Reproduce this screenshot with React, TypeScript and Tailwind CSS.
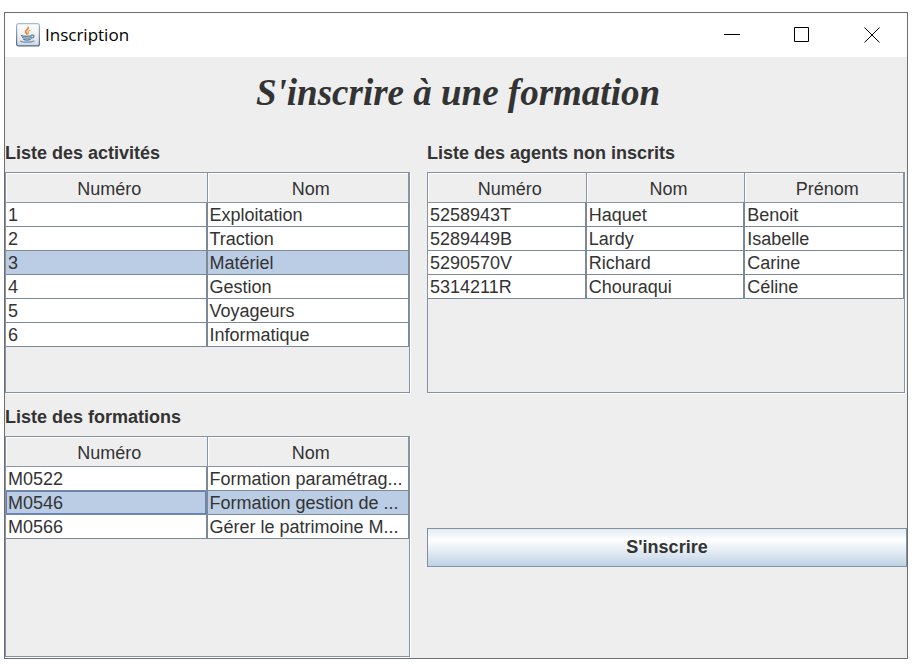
import { useState } from "react";

type Row = string[];

const activites: Row[] = [
  ["1", "Exploitation"],
  ["2", "Traction"],
  ["3", "Matériel"],
  ["4", "Gestion"],
  ["5", "Voyageurs"],
  ["6", "Informatique"],
];

const formations: Row[] = [
  ["M0522", "Formation paramétrag..."],
  ["M0546", "Formation gestion de ..."],
  ["M0566", "Gérer le patrimoine M..."],
];

const agents: Row[] = [
  ["5258943T", "Haquet", "Benoit"],
  ["5289449B", "Lardy", "Isabelle"],
  ["5290570V", "Richard", "Carine"],
  ["5314211R", "Chouraqui", "Céline"],
];

function JavaIcon() {
  return (
    <svg viewBox="0 0 24 24" className="size-6" aria-hidden="true">
      <defs>
        <linearGradient id="tile" x1="0" y1="0" x2="0" y2="1">
          <stop offset="0" stopColor="#fdfdfd" />
          <stop offset="0.6" stopColor="#eceef0" />
          <stop offset="1" stopColor="#cfd6dd" />
        </linearGradient>
        <linearGradient id="edge" x1="0" y1="0" x2="0" y2="1">
          <stop offset="0" stopColor="#a9bccd" />
          <stop offset="1" stopColor="#4c6883" />
        </linearGradient>
      </defs>
      <rect x="0.6" y="0.6" width="22.8" height="22.3" rx="2" fill="url(#tile)" stroke="url(#edge)" strokeWidth="1.2" />
      <g fill="none" strokeLinecap="round">
        <path d="M12.2 4.400c.9 2-3.400 2.800-2.700 4.600.3.900 1.300 1.300 1.600 2.100" stroke="#e9822f" strokeWidth="1.600" />
        <path d="M14 7.200c-2 .7-2.600 1.500-1.700 2.500.5.600.3 1-.2 1.300" stroke="#ec9a55" strokeWidth="1.100" />
        <path d="M5.500 12.600c1.800.9 8.500.9 10.200 0M6.600 14.500c1.700.9 6.800.9 8.500 0M7.700 16.400c1.500.7 5 .7 6.500 0" stroke="#557a9c" strokeWidth="1.200" />
        <path d="M15.800 12.200c3-.7 3 2.300-.4 3" stroke="#557a9c" strokeWidth="1.200" />
        <path d="M4.800 18.200c1.800 1.300 10.500 1.300 13.200-.2" stroke="#6d8eac" strokeWidth="1.200" />
      </g>
    </svg>
  );
}

interface ListProps {
  id: string;
  title: string;
  columns: string[];
  rows: Row[];
  initial?: number;
  focused?: boolean;
}

function ListPanel({ id, title, columns, rows, initial = -1, focused = false }: ListProps) {
  const [selected, setSelected] = useState(initial);
  return (
    <section className="flex flex-1 flex-col">
      <h2 id={id} className="h-[31px] text-lg leading-6 font-bold">
        {title}
      </h2>
      <div className="min-h-[200px] flex-1 border border-[#8492a2] shadow-[1px_1px_0_#ffffff]">
        <table aria-labelledby={id} className="w-full table-fixed border-separate border-spacing-0 text-lg leading-[21px]">
          <thead>
            <tr>
              {columns.map((c) => (
                <th
                  key={c}
                  scope="col"
                  className="h-[30px] border-r border-b border-[#8795a5] p-0 pt-1 pl-1.5 font-normal shadow-[inset_1px_1px_0_#ffffff]"
                >
                  {c}
                </th>
              ))}
            </tr>
          </thead>
          <tbody>
            {rows.map((row, i) => (
              <tr
                key={row[0]}
                onClick={() => setSelected(i)}
                aria-selected={i === selected}
                className={i === selected ? "bg-[#bacde4]" : "bg-white"}
              >
                {row.map((cell, j) => (
                  <td
                    key={j}
                    className={
                      "h-6 overflow-hidden border-b border-[#7a8a99] p-0 pt-0.5 pl-0.5 whitespace-nowrap " +
                      (j === row.length - 1 ? "border-r " : "border-r-2 ") +
                      (focused && i === selected && j === 0 ? "shadow-[inset_0_0_0_1px_#6382bf]" : "")
                    }
                  >
                    {cell}
                  </td>
                ))}
              </tr>
            ))}
          </tbody>
        </table>
      </div>
    </section>
  );
}

export default function App() {
  return (
    <div className="flex min-h-screen flex-col bg-white pt-3 pr-2 pb-[5px] pl-1 font-['Liberation_Sans',Arial,sans-serif] text-[#333333]">
      <main className="flex flex-1 flex-col border border-[#6f6f6f] bg-[#eeeeee]">
        <header className="flex h-11 items-center justify-between bg-white pl-[11px] text-black">
          <div className="flex items-center gap-[5px]">
            <JavaIcon />
            <span className="font-['Open_Sans',sans-serif] text-[17px] leading-6">Inscription</span>
          </div>
          <div className="flex">
            <button type="button" aria-label="Réduire" className="flex h-11 w-[70px] items-center justify-center">
              <svg viewBox="0 0 16 16" className="size-4" stroke="currentColor">
                <path d="M0 7.500h16" />
              </svg>
            </button>
            <button type="button" aria-label="Agrandir" className="flex h-11 w-[70px] items-center justify-center">
              <svg viewBox="0 0 16 16" className="size-4" fill="none" stroke="currentColor">
                <path d="M.5.5h14v14H.5z" />
              </svg>
            </button>
            <button type="button" aria-label="Fermer" className="flex h-11 w-[70px] items-center justify-center">
              <svg viewBox="0 0 16 16" className="size-4" fill="none" stroke="currentColor">
                <path d="M.5.5l15 15M15.500.5l-15 15" />
              </svg>
            </button>
          </div>
        </header>

        <h1 className="pt-2.5 pb-[22px] pl-1 text-center font-['Monotype_Corsiva','Liberation_Serif',serif] text-[37px] leading-[52px] font-bold italic">
          S'inscrire à une formation
        </h1>

        <div className="grid flex-1 grid-cols-[405fr_480fr] gap-x-[17px] pb-px">
          <div className="flex flex-col gap-3">
            <ListPanel id="activites" title="Liste des activités" columns={["Numéro", "Nom"]} rows={activites} initial={2} />
            <ListPanel id="formations" title="Liste des formations" columns={["Numéro", "Nom"]} rows={formations} initial={1} focused />
          </div>
          <div className="flex flex-col gap-3">
            <div className="flex flex-1 pr-0.5">
              <ListPanel id="agents" title="Liste des agents non inscrits" columns={["Numéro", "Nom", "Prénom"]} rows={agents} />
            </div>
            <div className="flex flex-1 items-center">
              <button
                type="button"
                className="mt-8 h-[39px] w-full border border-[#8091a3] bg-linear-to-b from-[#e3ecf3] via-white via-30% to-[#bfd2e4] text-lg font-bold"
              >
                S'inscrire
              </button>
            </div>
          </div>
        </div>
      </main>
    </div>
  );
}
